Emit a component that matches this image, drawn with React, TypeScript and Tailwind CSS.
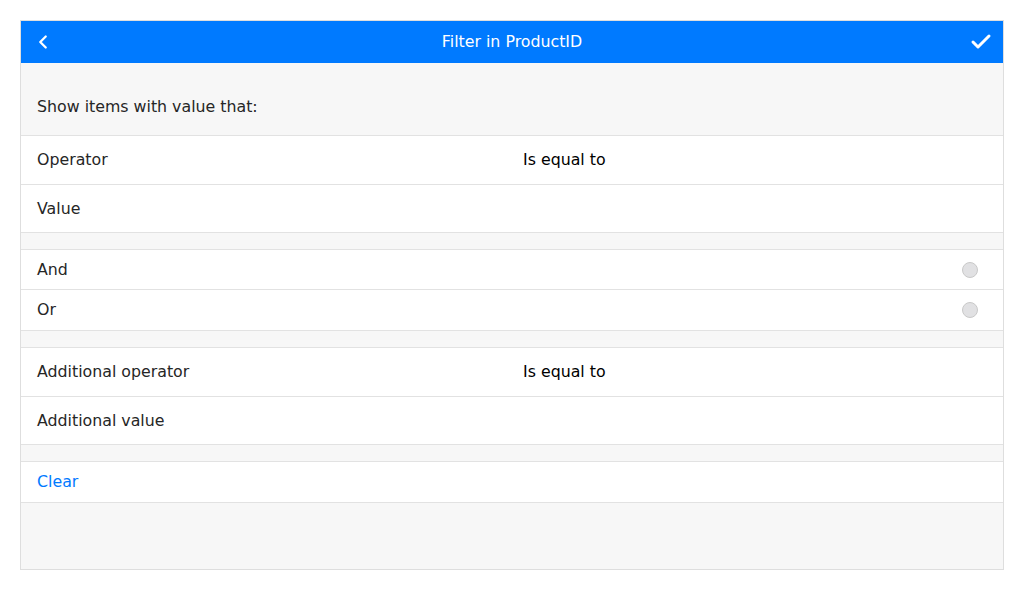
import { ChevronLeft, Check } from "lucide-react";

const font = { fontFamily: '"DejaVu Sans", sans-serif' };

function Row({ label, value, h = "h-[48px]" }: { label: string; value?: string; h?: string }) {
  return (
    <div className={`flex items-center ${h} border-b border-[#e2e2e2] bg-white pl-4`}>
      <span className="w-[486px] text-[15.8px] text-[#262626]">{label}</span>
      {value && <span className="text-[15.8px] text-black">{value}</span>}
    </div>
  );
}

function RadioRow({ label, h = "h-[40px]" }: { label: string; h?: string }) {
  return (
    <div className={`flex ${h} items-center justify-between border-b border-[#e2e2e2] bg-white pl-4 pr-[25px]`}>
      <span className="text-[15.8px] text-[#262626]">{label}</span>
      <span className="h-[16px] w-[16px] rounded-full border border-[#c9c9c9] bg-[#e1e1e3]" />
    </div>
  );
}

export default function App() {
  return (
    <div className="bg-white p-5" style={font}>
      <div className="flex h-[550px] flex-col border border-[#dedede] bg-[#f7f7f7]">
        {/* Header */}
        <div className="relative flex h-[42px] items-center justify-center bg-[#007aff] text-white">
          <ChevronLeft className="absolute left-[11px] h-[22px] w-[22px]" strokeWidth={2.5} />
          <span className="text-[15.8px]">Filter in ProductID</span>
          <Check className="absolute right-[10px] h-[24px] w-[24px]" strokeWidth={3} />
        </div>

        <div className="pb-4 pl-4 pt-8 text-[15.8px] leading-6 text-[#262626]">Show items with value that:</div>

        <div className="border-t border-[#e2e2e2]">
          <Row label="Operator" value="Is equal to" h="h-[49px]" />
          <Row label="Value" />
        </div>

        <div className="mt-4 border-t border-[#e2e2e2]">
          <RadioRow label="And" />
          <RadioRow label="Or" h="h-[41px]" />
        </div>

        <div className="mt-4 border-t border-[#e2e2e2]">
          <Row label="Additional operator" value="Is equal to" h="h-[49px]" />
          <Row label="Additional value" />
        </div>

        <div className="mt-4 border-t border-[#e2e2e2]">
          <div className="flex h-[41px] items-center border-b border-[#e2e2e2] bg-white pl-4 text-[15.8px] text-[#007aff]">
            Clear
          </div>
        </div>
      </div>
    </div>
  );
}
